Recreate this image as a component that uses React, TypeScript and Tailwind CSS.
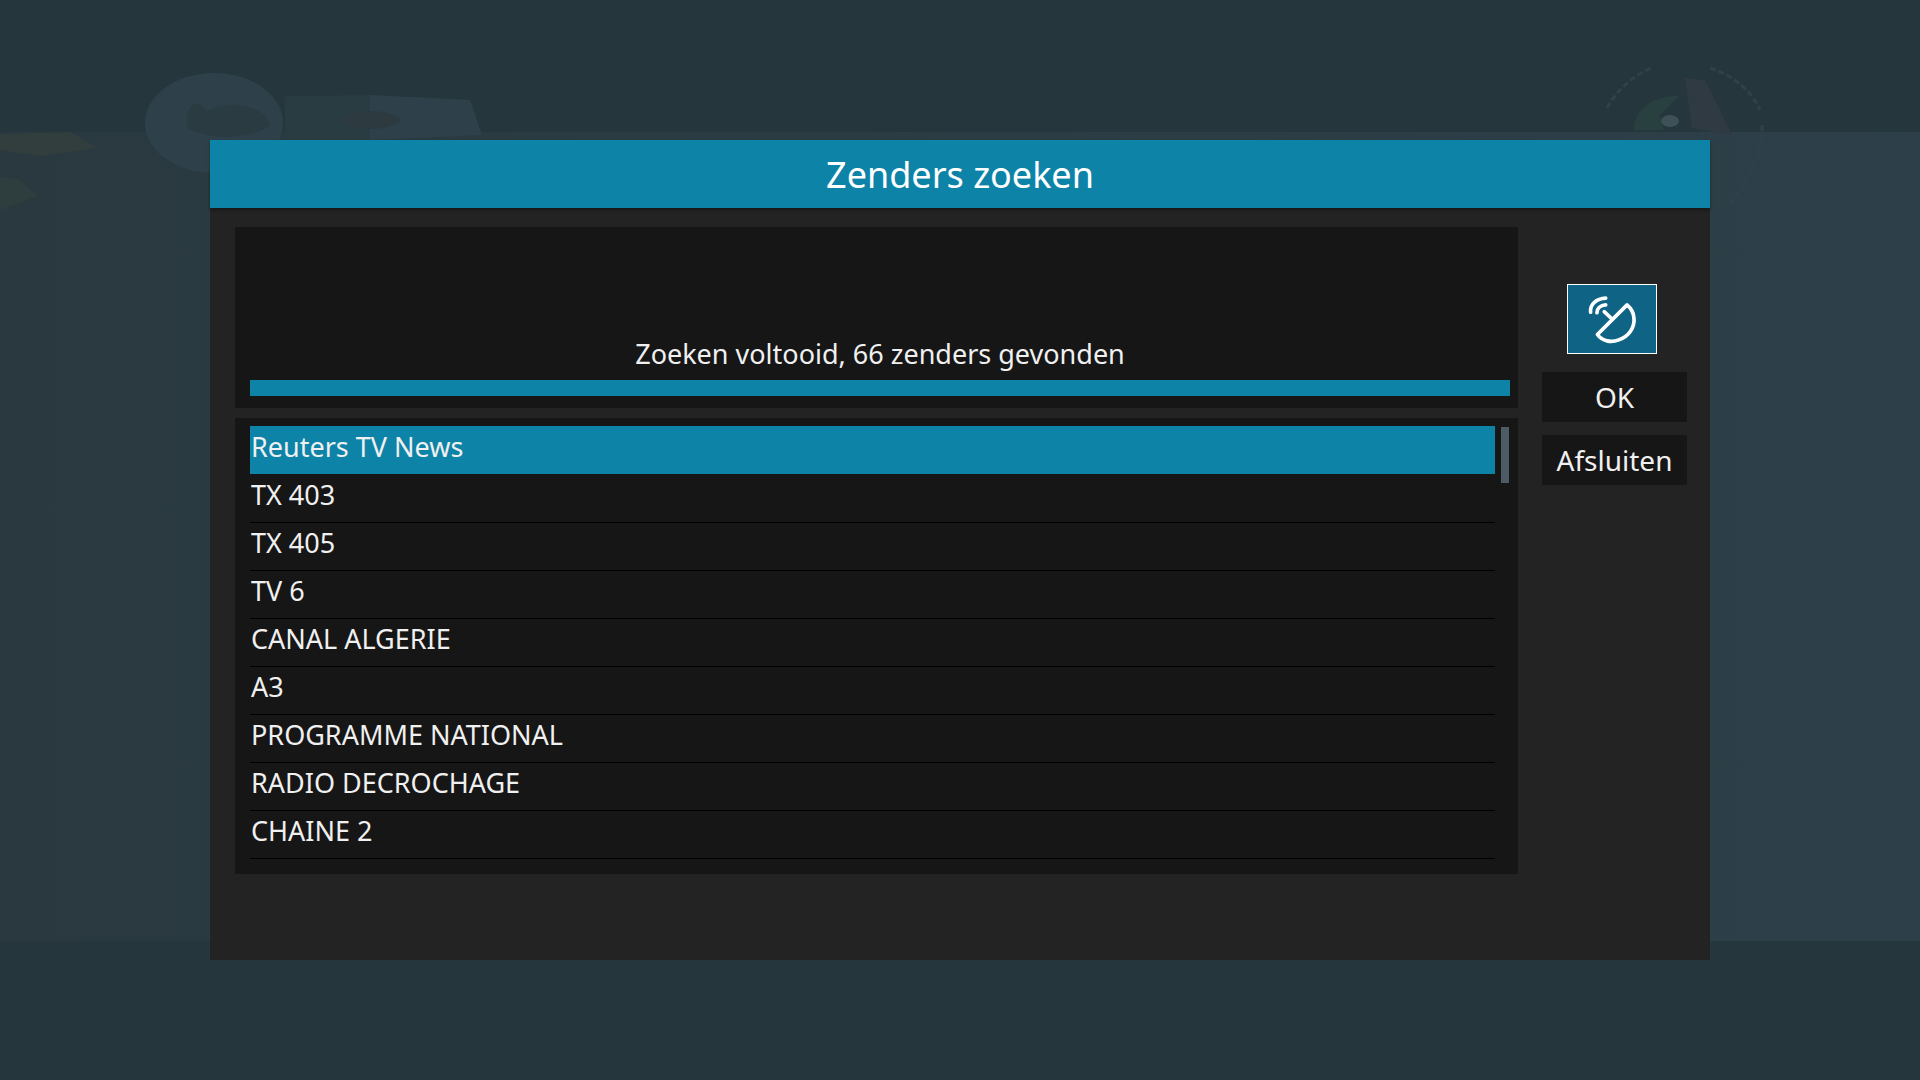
const channels = [
  'Reuters TV News',
  'TX 403',
  'TX 405',
  'TV 6',
  'CANAL ALGERIE',
  'A3',
  'PROGRAMME NATIONAL',
  'RADIO DECROCHAGE',
  'CHAINE 2',
]

function DishIcon() {
  return (
    <svg viewBox="0 0 90 70" className="h-full w-full" fill="none" stroke="#ffffff" strokeWidth="3.8" strokeLinecap="round" strokeLinejoin="round">
      <path d="M60.5 20.5 L30 51 C35 58 44 59.5 52 56.5 C62 53 69 44 67.5 33 C67 28 64.5 24 60.5 20.5 Z" />
      <path d="M44.5 34.5 L37 27.5" />
      <path d="M23 28 C22 20 29 14 38.5 13.5" />
      <path d="M29.5 28.5 C29.5 24 33 21 38.5 20.5" />
    </svg>
  )
}

function Backdrop() {
  return (
    <div className="absolute inset-0 bg-[#26363d]">
      <div className="absolute inset-x-0 top-[132px] h-[809px] bg-gradient-to-r from-[#29393f] via-[#2b3c44] to-[#2d3f48]" />
      <svg viewBox="0 0 1920 1080" className="absolute inset-0 h-full w-full" fill="none">
        <ellipse cx="214" cy="123" rx="69" ry="50" fill="#2e414a" />
        <path d="M188 128 C182 105 200 95 207 112 C222 100 268 104 270 126 C250 138 212 142 188 128 Z" fill="#2a3b42" />
        <path d="M285 96 L370 95 L370 140 L285 140 Z" fill="#283c42" />
        <path d="M370 95 L470 100 L482 135 L370 140 Z" fill="#2e414a" />
        <ellipse cx="370" cy="120" rx="30" ry="9" fill="#2d3a40" />
        <path d="M0 134 L70 132 L98 148 L40 156 L0 150 Z" fill="#313e3d" />
        <path d="M0 176 L20 180 L38 196 L0 210 Z" fill="#2e3e3e" />
        <path d="M1607 108 C1620 85 1640 72 1652 68 M1710 68 C1735 76 1752 92 1760 110 M1762 125 C1762 160 1745 180 1730 205" stroke="#2f4149" strokeWidth="3" strokeDasharray="6 3" />
        <path d="M1634 130 C1635 108 1650 98 1680 95 L1660 115 L1664 130 Z" fill="#28403f" />
        <ellipse cx="1670" cy="121" rx="9" ry="6" fill="#3f5158" />
        <path d="M1685 78 L1705 80 L1732 135 L1692 128 Z" fill="#2f3a42" />
      </svg>
    </div>
  )
}

export default function App() {
  return (
    <div className="relative h-[1080px] w-[1920px] overflow-hidden font-['Noto_Sans',sans-serif] text-[#f0f0f0]">
      <Backdrop />
      <div className="relative pl-[210px] pt-[140px]">
        <div className="flex h-[820px] w-[1500px] flex-col bg-[#232323]">
          <header className="flex h-[68px] items-center justify-center bg-[#0e83a8] pt-[2px] text-[36px] leading-none text-white shadow-[0_2px_3px_rgba(0,0,0,0.35)]">
            Zenders zoeken
          </header>
          <div className="flex pl-[25px] pt-[19px]">
            <div className="flex w-[1283px] flex-col gap-[10px]">
              <section className="flex h-[181px] flex-col justify-end bg-[#161616] pb-[12px] pl-[15px] pr-[8px]">
                <p className="mb-[6px] text-center text-[27px] leading-[40px]">Zoeken voltooid, 66 zenders gevonden</p>
                <div className="h-[16px] bg-[#0e83a8]" />
              </section>
              <section className="flex h-[456px] gap-[6px] bg-[#161616] pl-[15px] pr-[9px] pt-[8px]">
                <ul className="w-[1245px]">
                  {channels.map((name, i) => (
                    <li
                      key={name}
                      className={`flex h-[48px] items-start pl-[1px] text-[27px] ${
                        i === 0 ? 'mb-px bg-[#0e83a8] leading-[41px]' : 'border-b border-black leading-[39px]'
                      }`}
                    >
                      {name}
                    </li>
                  ))}
                </ul>
                <div className="mt-[1px] h-[56px] w-[8px] bg-[#4d5b65]" />
              </section>
            </div>
            <aside className="ml-[24px] flex w-[145px] flex-col items-center pt-[57px]">
              <div className="ml-[-5px] h-[70px] w-[90px] border border-white bg-[#0f6485]">
                <DishIcon />
              </div>
              <button className="mt-[18px] h-[50px] w-[145px] bg-[#161616] text-[28px] leading-none">OK</button>
              <button className="mt-[13px] h-[50px] w-[145px] bg-[#161616] text-[28px] leading-none">Afsluiten</button>
            </aside>
          </div>
        </div>
      </div>
    </div>
  )
}
